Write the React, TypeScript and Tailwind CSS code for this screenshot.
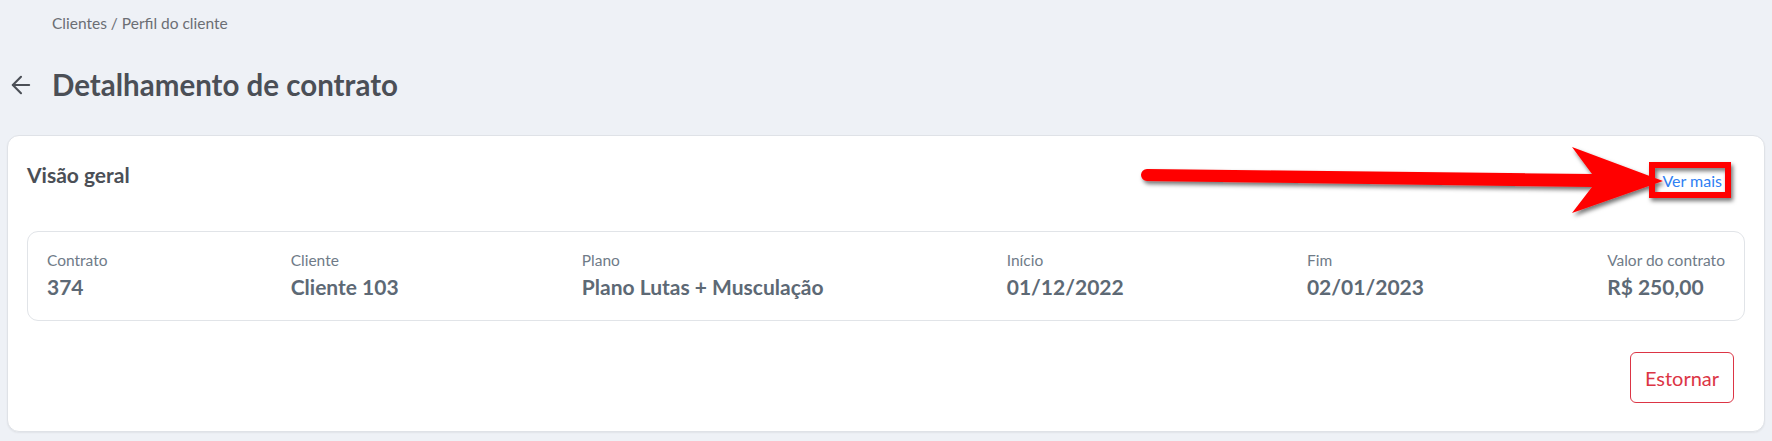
import { ArrowLeft } from 'lucide-react'

const fields = [
  { label: 'Contrato', value: '374' },
  { label: 'Cliente', value: 'Cliente 103' },
  { label: 'Plano', value: 'Plano Lutas + Musculação' },
  { label: 'Início', value: '01/12/2022' },
  { label: 'Fim', value: '02/01/2023' },
  { label: 'Valor do contrato', value: 'R$ 250,00' },
]

function Annotation() {
  return (
    <svg className="absolute inset-0 pointer-events-none" width="1772" height="441" viewBox="0 0 1772 441">
      <defs>
        <filter id="shadow" x="-10%" y="-50%" width="120%" height="200%">
          <feDropShadow dx="2" dy="3" stdDeviation="2" floodColor="#000" floodOpacity="0.55" />
        </filter>
      </defs>
      <g filter="url(#shadow)" fill="#ff0000">
        <path d="M1147 169 L1592 174 L1572 147 L1663 181 L1572 213 L1592 187 L1147 181 A6 6 0 0 1 1147 169 Z" />
        <rect x="1652" y="165" width="76" height="30" fill="none" stroke="#ff0000" strokeWidth="6" />
      </g>
    </svg>
  )
}

export default function App() {
  return (
    <div className="relative w-[1772px] h-[441px] bg-[#eef1f6] font-['Lato',sans-serif] overflow-hidden">
      <div className="pl-[52px] pt-[14px] text-[15.5px] leading-[18px] text-[#6b6e74]">Clientes / Perfil do cliente</div>

      <div className="flex items-center mt-[35px] h-[36px]">
        <div className="w-[52px] flex justify-center pr-[10px]">
          <ArrowLeft size={28} strokeWidth={1.8} className="text-[#4b4f56]" />
        </div>
        <h1 className="text-[29.5px] font-bold text-[#4b4f56] leading-none">Detalhamento de contrato</h1>
      </div>

      <div className="mx-[7px] mt-[32px] h-[297px] bg-white rounded-[12px] border border-[#dfe2e7] shadow-[0_1px_2px_rgba(0,0,0,0.06)] px-[19px] pt-[26px]">
        <div className="flex items-start justify-between">
          <h2 className="text-[21px] font-bold text-[#4b4f56] leading-[26px]">Visão geral</h2>
          <a className="text-[16px] text-[#2f7ff3] mt-[10px] mr-[23px] leading-[18px]">Ver mais</a>
        </div>

        <div className="mt-[41px] h-[90px] border border-[#e1e4e8] rounded-[11px] px-[19px] pt-[18px] flex justify-between">
          {fields.map((f) => (
            <div key={f.label} className="flex flex-col">
              <span className="text-[15.5px] text-[#6f7b88] leading-[20px]">{f.label}</span>
              <span className="text-[21px] font-bold text-[#5d6975] leading-[28px] mt-[3px]">{f.value}</span>
            </div>
          ))}
        </div>

        <div className="flex justify-end mt-[31px] pr-[11px]">
          <button className="w-[104px] h-[51px] rounded-[6px] border border-[#dc3545] text-[#dc3545] text-[20px] leading-none">
            Estornar
          </button>
        </div>
      </div>

      <Annotation />
    </div>
  )
}
